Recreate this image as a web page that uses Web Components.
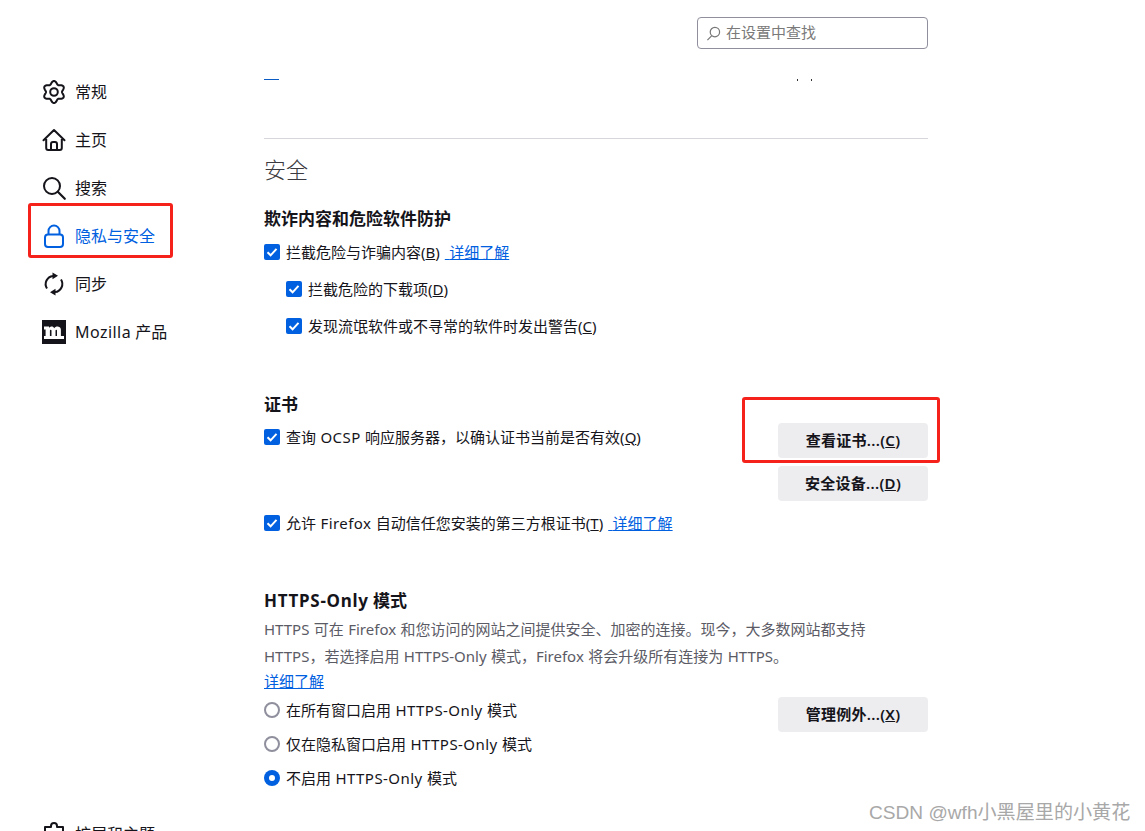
<!DOCTYPE html>
<html lang="zh">
<head>
<meta charset="utf-8">
<title>设置</title>
<style>
  html, body { margin: 0; padding: 0; background: #fff; }
  body { font: 15px "Noto Sans", "Noto Sans CJK SC", sans-serif; color: #15141a; }
  .en { letter-spacing: .45px; }
</style>
</head>
<body>
<prefs-page>
  <nav-item slot="nav" icon="gear">常规</nav-item>
  <nav-item slot="nav" icon="home">主页</nav-item>
  <nav-item slot="nav" icon="search">搜索</nav-item>
  <nav-item slot="nav" icon="lock" selected>隐私与安全</nav-item>
  <nav-item slot="nav" icon="sync">同步</nav-item>
  <nav-item slot="nav" icon="moz"><span class="en">Mozilla</span> 产品</nav-item>
  <nav-item slot="footer" icon="ext">扩展和主题</nav-item>

  <search-box slot="search" placeholder="在设置中查找"></search-box>

  <h-title>安全</h-title>

  <sub-head style="margin-top:22px">欺诈内容和危险软件防护</sub-head>
  <check-row style="margin-top:9px">拦截危险与诈骗内容(<u>B</u>)<pref-link>详细了解</pref-link></check-row>
  <check-row indent style="margin-top:15px">拦截危险的下载项(<u>D</u>)</check-row>
  <check-row indent style="margin-top:15px">发现流氓软件或不寻常的软件时发出警告(<u>C</u>)</check-row>

  <sub-head style="margin-top:57px">证书</sub-head>
  <split-row style="margin-top:8px;height:86px">
    <check-row>查询 <span class="en">OCSP</span> 响应服务器，以确认证书当前是否有效(<u>Q</u>)</check-row>
    <pref-button slot="side" style="margin-top:-2px">查看证书...(<u>C</u>)</pref-button>
    <pref-button slot="side" style="margin-top:8px">安全设备...(<u>D</u>)</pref-button>
  </split-row>
  <check-row style="margin-top:0">允许 <span class="en">Firefox</span> 自动信任您安装的第三方根证书(<u>T</u>)<pref-link>详细了解</pref-link></check-row>

  <sub-head style="margin-top:56px"><span style="letter-spacing:.7px">HTTPS-Only</span> 模式</sub-head>
  <pref-text style="margin-top:3px">HTTPS 可在 Firefox 和您访问的网站之间提供安全、加密的连接。现今，大多数网站都支持 HTTPS，若选择启用 HTTPS-Only 模式，Firefox 将会升级所有连接为 HTTPS。</pref-text>
  <pref-link block>详细了解</pref-link>
  <split-row style="margin-top:1px">
    <radio-row style="margin-top:5px">在所有窗口启用 <span class="en">HTTPS-Only</span> 模式</radio-row>
    <radio-row style="margin-top:10px">仅在隐私窗口启用 <span class="en">HTTPS-Only</span> 模式</radio-row>
    <radio-row checked style="margin-top:10px">不启用 <span class="en">HTTPS-Only</span> 模式</radio-row>
    <pref-button slot="side" style="margin-top:4px">管理例外...(<u>X</u>)</pref-button>
  </split-row>
</prefs-page>

<script>
// cog outline: six rounded lobes, one pointing straight up
function gearPath() {
  const pts = [];
  for (let i = 0; i < 120; i++) {
    const a = i / 120 * Math.PI * 2;
    const r = 9.5 - 1.5 * Math.cos(6 * a);
    pts.push((12 + r * Math.cos(a)).toFixed(2) + ' ' + (12 + r * Math.sin(a)).toFixed(2));
  }
  return 'M' + pts.join('L') + 'z';
}

const ICONS = {
  gear: `<path d="${gearPath()}" fill="none" stroke="currentColor" stroke-width="2" stroke-linejoin="round"/><circle cx="12" cy="12" r="3.800" fill="none" stroke="currentColor" stroke-width="2"/>`,
  home: `<path d="M1.500 12.200 12 2l10.500 10.200M4.200 9.800V20a2 2 0 0 0 2 2h11.600a2 2 0 0 0 2-2V9.800M9 22v-6a2 2 0 0 1 2-2h2a2 2 0 0 1 2 2v6" fill="none" stroke="currentColor" stroke-width="2" stroke-linecap="round" stroke-linejoin="round"/>`,
  search: `<circle cx="10" cy="10" r="8" fill="none" stroke="currentColor" stroke-width="2"/><path d="m15.800 15.800 7 7" fill="none" stroke="currentColor" stroke-width="2.200" stroke-linecap="round"/>`,
  lock: `<path d="M6.500 10.500V7a5.500 5.500 0 0 1 11 0v3.500" fill="none" stroke="currentColor" stroke-width="2"/><rect x="3" y="10.500" width="18" height="12.500" rx="3" fill="none" stroke="currentColor" stroke-width="2"/>`,
  sync: `<path d="M5 16.500A8.200 8.200 0 0 1 11 3.900M19 7.500A8.200 8.200 0 0 1 13 20.100" fill="none" stroke="currentColor" stroke-width="2"/><path d="M10.500 0.500 16 3.800l-5.500 3.400zM13.500 16.800 8 20.200l5.500 3.400z" fill="currentColor"/>`,
  moz: `<rect width="24" height="24" fill="#15141a"/><path d="M2 6.500h5v1.500c1.200-1.900 4.300-2.100 5.200.2 1.300-2.300 6.300-2.500 6.700 1.300V16H22v3h-7v-8.500c0-1-1.500-1-1.500.1V16H15v3h-5.500v-8.500c0-1-1.600-1-1.600.1V16h1.600v3H2v-3h1.600V9.500H2z" fill="#fff"/>`,
  ext: `<path d="M9 5V4a3 3 0 0 1 6 0v1h6v6h-1a3 3 0 0 0 0 6h1v5H3v-6h1a3 3 0 0 0 0-6H3V5z" fill="none" stroke="currentColor" stroke-width="2" stroke-linejoin="round"/>`
};

class PrefsPage extends HTMLElement {
  constructor() {
    super();
    this.attachShadow({ mode: 'open' });
    this.shadowRoot.innerHTML = `
      <style>
        :host { display: block; position: relative; width: 1145px; height: 831px; overflow: hidden; background: #fff; }
        .wrap { display: flex; height: 100%; }
        .side { width: 264px; flex: none; padding: 68px 0 0 42px; box-sizing: border-box; position: relative; display: flex; flex-direction: column; }
        .foot { margin-top: auto; height: 21px; overflow: hidden; }
        .main { width: 664px; flex: none; }
        .top { height: 48px; padding-top: 17px; box-sizing: border-box; display: flex; justify-content: flex-end; }
        .cut { height: 2px; margin-top: 31px; display: flex; justify-content: space-between; }
        .cut i { display: block; width: 15px; height: 1px; background: #0a5cc4; }
        .cut b { display: block; width: 15px; height: 2px; margin-right: 116px; border-left: 1px solid #333; border-right: 1px solid #333; box-sizing: border-box; }
        hr { border: 0; height: 1px; background: #d7d7db; margin: 57px 0 0; }
        .mark { position: absolute; left: 869px; top: 797px; font: 19.100px "Liberation Sans", "Noto Sans CJK SC", sans-serif; color: #a8a8a8; white-space: nowrap; }
        .red { position: absolute; border: 3px solid #f5221b; border-radius: 3px; box-sizing: border-box; }
      </style>
      <div class="wrap">
        <div class="side"><slot name="nav"></slot><div class="foot"><slot name="footer"></slot></div></div>
        <div class="main">
          <div class="top"><slot name="search"></slot></div>
          <div class="cut"><i></i><b></b></div>
          <hr>
          <slot></slot>
        </div>
      </div>
      <div class="red" style="left:28px;top:203px;width:145px;height:55px"></div>
      <div class="red" style="left:742px;top:397px;width:198px;height:66px"></div>
      <div class="mark">CSDN @wfh小黑屋里的小黄花</div>`;
  }
}

class NavItem extends HTMLElement {
  constructor() {
    super();
    this.attachShadow({ mode: 'open' });
  }
  connectedCallback() {
    const name = this.getAttribute('icon');
    this.shadowRoot.innerHTML = `
      <style>
        :host { display: flex; align-items: center; gap: 9px; height: 48px; color: #15141a; font-size: 16px; white-space: nowrap; }
        :host([selected]) { color: #0060df; }
        svg { width: 24px; height: 24px; flex: none; overflow: visible; }
        span { padding-bottom: 2px; }
      </style>
      <svg viewBox="0 0 24 24">${ICONS[name]}</svg><span><slot></slot></span>`;
  }
}

class SearchBox extends HTMLElement {
  constructor() {
    super();
    this.attachShadow({ mode: 'open' });
  }
  connectedCallback() {
    this.shadowRoot.innerHTML = `
      <style>
        :host { display: flex; align-items: center; width: 231px; height: 32px; box-sizing: border-box; border: 1px solid #8f8f9d; border-radius: 4px; padding-left: 8px; gap: 5px; color: #7a7a7a; font-size: 15px; }
        svg { width: 15px; height: 15px; flex: none; }
        span { padding-bottom: 3px; }
      </style>
      <svg viewBox="0 0 16 16"><circle cx="9.500" cy="6.500" r="5" fill="none" stroke="#777" stroke-width="1.300"/><path d="M6 10.500 1.500 15" stroke="#777" stroke-width="1.300" fill="none"/></svg>
      <span>${this.getAttribute('placeholder')}</span>`;
  }
}

class HTitle extends HTMLElement {
  constructor() {
    super();
    this.attachShadow({ mode: 'open' }).innerHTML = `
      <style>:host { display: block; font-size: 22px; font-weight: 300; line-height: 32px; margin-top: 14px; color: #3a3a40; }</style><slot></slot>`;
  }
}

class SubHead extends HTMLElement {
  constructor() {
    super();
    this.attachShadow({ mode: 'open' }).innerHTML = `
      <style>:host { display: block; font-size: 17px; font-weight: 700; line-height: 24px; color: #15141a; }</style><slot></slot>`;
  }
}

class CheckRow extends HTMLElement {
  constructor() {
    super();
    this.attachShadow({ mode: 'open' }).innerHTML = `
      <style>
        :host { display: flex; align-items: center; height: 22px; gap: 6px; font-size: 15px; word-spacing: .5px; white-space: nowrap; }
        :host([indent]) { padding-left: 22px; }
        .box { width: 16px; height: 16px; margin-top: 2px; border-radius: 2px; background: #0060df; flex: none; display: flex; }
        svg { width: 16px; height: 16px; }
      </style>
      <span class="box"><svg viewBox="0 0 16 16"><path d="M3.500 8.200 6.600 11.300 12.500 4.800" fill="none" stroke="#fff" stroke-width="2"/></svg></span>
      <span><slot></slot></span>`;
  }
}

class RadioRow extends HTMLElement {
  constructor() {
    super();
    this.attachShadow({ mode: 'open' }).innerHTML = `
      <style>
        :host { display: flex; align-items: center; height: 24px; gap: 6px; font-size: 15px; word-spacing: .5px; white-space: nowrap; }
        .dot { width: 16px; height: 16px; border-radius: 50%; border: 2px solid #8f8f9d; box-sizing: border-box; flex: none; }
        .txt { padding-bottom: 2px; }
        :host([checked]) .dot { border: 0; background: #fff; box-shadow: inset 0 0 0 5px #0060df; }
      </style>
      <span class="dot"></span><span class="txt"><slot></slot></span>`;
  }
}

class PrefLink extends HTMLElement {
  constructor() {
    super();
    this.attachShadow({ mode: 'open' }).innerHTML = `
      <style>
        :host { display: inline; color: #0060df; text-decoration: underline; margin-left: 5px; font-size: 15px; }
        :host([block]) { display: block; margin-left: 0; line-height: 22px; }
      </style><slot></slot>`;
  }
}

class PrefText extends HTMLElement {
  constructor() {
    super();
    this.attachShadow({ mode: 'open' }).innerHTML = `
      <style>:host { display: block; font-size: 15px; word-spacing: .5px; line-height: 27px; color: #5b5b66; width: 620px; }</style><slot></slot>`;
  }
}

class SplitRow extends HTMLElement {
  constructor() {
    super();
    this.attachShadow({ mode: 'open' }).innerHTML = `
      <style>
        :host { display: flex; justify-content: space-between; }
        .side { width: 150px; flex: none; display: flex; flex-direction: column; }
      </style>
      <div><slot></slot></div><div class="side"><slot name="side"></slot></div>`;
  }
}

class PrefButton extends HTMLElement {
  constructor() {
    super();
    this.attachShadow({ mode: 'open' }).innerHTML = `
      <style>
        :host { display: flex; align-items: center; justify-content: center; height: 35px; border-radius: 4px; background: #ededf0; font-size: 15px; font-weight: 600; letter-spacing: .3px; color: #15141a; white-space: nowrap; }
        span { padding-bottom: 2px; }
      </style><span><slot></slot></span>`;
  }
}

customElements.define('prefs-page', PrefsPage);
customElements.define('nav-item', NavItem);
customElements.define('search-box', SearchBox);
customElements.define('h-title', HTitle);
customElements.define('sub-head', SubHead);
customElements.define('check-row', CheckRow);
customElements.define('radio-row', RadioRow);
customElements.define('pref-link', PrefLink);
customElements.define('pref-text', PrefText);
customElements.define('split-row', SplitRow);
customElements.define('pref-button', PrefButton);
</script>
</body>
</html>
